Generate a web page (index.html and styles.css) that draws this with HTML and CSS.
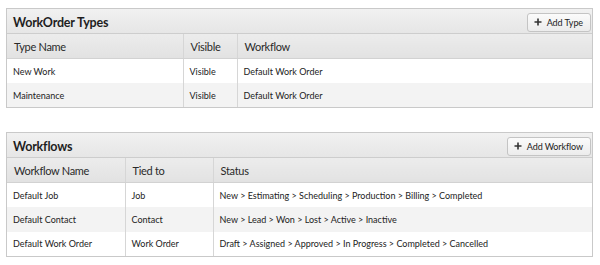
FILE: index.html
```html
<!DOCTYPE html>
<html>
<head>
<meta charset="utf-8">
<link rel="stylesheet" href="styles.css">
</head>
<body>
<section class="panel">
  <div class="panel-bar">
    <h2 class="panel-title">WorkOrder Types</h2>
    <button class="btn"><svg class="plus" viewBox="0 0 8 8"><path d="M4 0.5V7.5M0.5 4H7.5"/></svg>Add Type</button>
  </div>
  <table class="grid types">
    <colgroup><col class="c1"><col class="c2"><col></colgroup>
    <thead><tr><th>Type Name</th><th>Visible</th><th>Workflow</th></tr></thead>
    <tbody>
      <tr><td>New Work</td><td>Visible</td><td>Default Work Order</td></tr>
      <tr><td>Maintenance</td><td>Visible</td><td>Default Work Order</td></tr>
    </tbody>
  </table>
</section>

<section class="panel">
  <div class="panel-bar">
    <h2 class="panel-title">Workflows</h2>
    <button class="btn"><svg class="plus" viewBox="0 0 8 8"><path d="M4 0.5V7.5M0.5 4H7.5"/></svg>Add Workflow</button>
  </div>
  <table class="grid flows">
    <colgroup><col class="c1"><col class="c2"><col></colgroup>
    <thead><tr><th>Workflow Name</th><th>Tied to</th><th>Status</th></tr></thead>
    <tbody>
      <tr><td>Default Job</td><td>Job</td><td>New &gt; Estimating &gt; Scheduling &gt; Production &gt; Billing &gt; Completed</td></tr>
      <tr><td>Default Contact</td><td>Contact</td><td>New &gt; Lead &gt; Won &gt; Lost &gt; Active &gt; Inactive</td></tr>
      <tr><td>Default Work Order</td><td>Work Order</td><td>Draft &gt; Assigned &gt; Approved &gt; In Progress &gt; Completed &gt; Cancelled</td></tr>
    </tbody>
  </table>
</section>
</body>
</html>
```

FILE: styles.css
```css
html, body {
  margin: 0;
  background: #fff;
}

body {
  padding: 8px 7px 0 6px;
  font-family: Lato, "Open Sans", sans-serif;
  color: #222;
  display: flex;
  flex-direction: column;
  gap: 24px;
}

.panel {
  border: 1px solid #c9c9c9;
  background: #fff;
}

.panel-bar {
  height: 25px;
  box-sizing: border-box;
  display: flex;
  align-items: center;
  justify-content: space-between;
  padding: 2px 1px 0 6px;
  background: linear-gradient(#f1f1f1, #e6e6e6);
  border-bottom: 1px solid #cdcdcd;
}

.panel-title {
  margin: 0;
  font-size: 12.5px;
  font-weight: 700;
  letter-spacing: -0.2px;
  color: #1e1e1e;
}

.btn {
  height: 19px;
  display: flex;
  align-items: center;
  gap: 5px;
  padding: 0 7px 0 6px;
  font-family: inherit;
  font-size: 9px;
  letter-spacing: -0.1px;
  color: #222;
  background: linear-gradient(#fbfbfb, #ececec);
  border: 1px solid #c4c4c4;
  border-radius: 3px;
}

.plus {
  width: 8px;
  height: 8px;
  stroke: #333;
  stroke-width: 1.6;
  fill: none;
}

.grid {
  width: 100%;
  border-collapse: collapse;
  table-layout: fixed;
}

.types .c1 { width: 176px; }
.types .c2 { width: 54px; }
.flows .c1 { width: 118px; }
.flows .c2 { width: 88px; }

.grid th {
  height: 24px;
  padding: 0 7px;
  text-align: left;
  font-weight: 400;
  font-size: 11px;
  letter-spacing: -0.3px;
  color: #2a2a2a;
  background: linear-gradient(#ececec, #e2e2e2);
  border-bottom: 1px solid #d2d2d2;
}

.grid td {
  height: 24px;
  padding: 0 6px;
  font-size: 9px;
  color: #222;
  white-space: nowrap;
}

.flows td {
  height: 24.4px;
}

.grid th + th,
.grid td + td {
  border-left: 1px solid #d6d6d6;
}

.grid tbody tr:nth-child(even) td {
  background: #f3f3f3;
}
```
